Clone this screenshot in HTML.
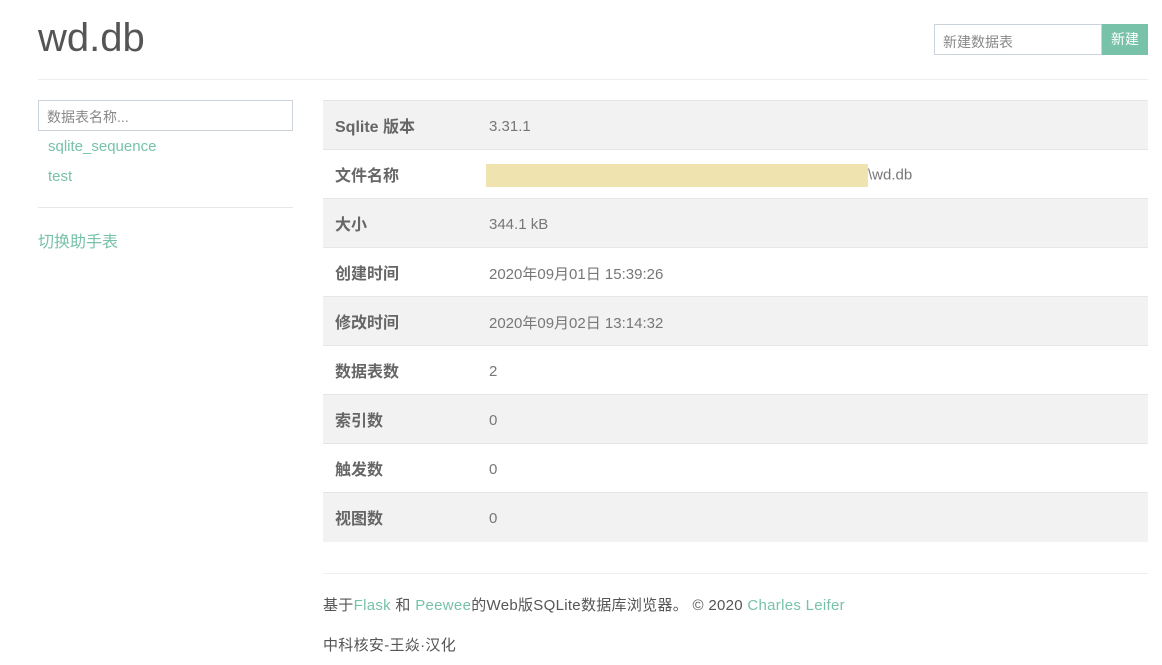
<!DOCTYPE html>
<html><head><meta charset="utf-8"><style>
*{box-sizing:border-box;margin:0;padding:0}
body{width:1162px;height:665px;background:#fff;font-family:"Liberation Sans","Noto Sans CJK SC",sans-serif;color:#555;font-size:15px;position:relative;overflow:hidden}
.a{position:absolute}
h1{position:absolute;left:38px;top:16px;font-size:40px;font-weight:normal;color:#555;letter-spacing:0}
.hr{position:absolute;height:1px;background:#eee}
.g{color:#77c2a9}
table{position:absolute;left:323px;top:100px;width:825px;border-collapse:collapse}
td{height:49px;border-top:1px solid #e6e6e6;padding:2px 12px 0;font-size:15px;color:#777;vertical-align:middle}
td.k{width:154px;font-weight:bold;color:#666;font-size:16px;padding-top:0}
tr:nth-child(odd) td{background:#f2f2f2}
</style></head><body>
<h1>wd.db</h1>
<div class="a" style="left:934px;top:24px;width:168px;height:31px;border:1px solid #ccd2d9;font-size:14px;color:#888;padding:7px 8px">新建数据表</div>
<div class="a" style="left:1102px;top:24px;width:46px;height:31px;background:#77c2a9;color:#fff;font-size:14px;text-align:center;line-height:31px">新建</div>
<div class="hr" style="left:38px;top:79px;width:1110px"></div>
<div class="a" style="left:38px;top:100px;width:255px;height:31px;border:1px solid #ccd2d9;font-size:14px;color:#888;padding:6px 8px">数据表名称...</div>
<div class="a g" style="left:48px;top:138px">sqlite_sequence</div>
<div class="a g" style="left:48px;top:168px">test</div>
<div class="hr" style="left:38px;top:207px;width:255px;background:#e6e6e6"></div>
<div class="a g" style="left:38px;top:228px;font-size:16px">切换助手表</div>
<table>
<tr><td class="k">Sqlite 版本</td><td>3.31.1</td></tr>
<tr><td class="k">文件名称</td><td style="padding-left:9px"><span style="display:inline-block;width:382px;height:23px;background:#efe3b0;vertical-align:middle"></span>\wd.db</td></tr>
<tr><td class="k">大小</td><td>344.1 kB</td></tr>
<tr><td class="k">创建时间</td><td>2020年09月01日 15:39:26</td></tr>
<tr><td class="k">修改时间</td><td>2020年09月02日 13:14:32</td></tr>
<tr><td class="k">数据表数</td><td>2</td></tr>
<tr><td class="k">索引数</td><td>0</td></tr>
<tr><td class="k">触发数</td><td>0</td></tr>
<tr><td class="k">视图数</td><td>0</td></tr>
</table>
<div class="hr" style="left:323px;top:573px;width:825px"></div>
<div class="a" style="left:323px;top:594px;letter-spacing:0.3px">基于<span class="g">Flask</span> 和 <span class="g">Peewee</span>的Web版SQLite数据库浏览器。 © 2020 <span class="g">Charles Leifer</span></div>
<div class="a" style="left:323px;top:634px;letter-spacing:0.3px">中科核安-王焱·汉化</div>
</body></html>
